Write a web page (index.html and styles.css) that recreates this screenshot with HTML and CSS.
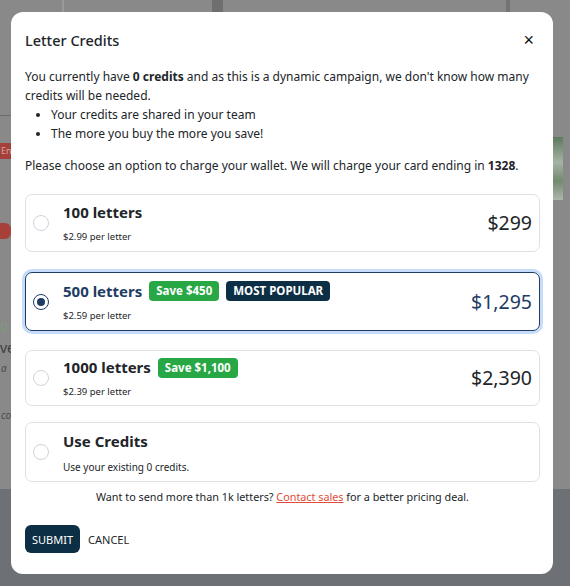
FILE: index.html
```html
<!DOCTYPE html>
<html lang="en">
<head>
<meta charset="utf-8">
<title>Letter Credits</title>
<link rel="stylesheet" href="styles.css">
</head>
<body>
<div class="page">
  <div class="bg-bottom"></div>
  <div class="bg-line bg-line-1"></div>
  <div class="bg-line bg-line-2"></div>
  <div class="bg-line bg-line-3"></div>
  <div class="bg-rule"></div>
  <div class="bg-tag">En</div>
  <div class="bg-dot"></div>
  <div class="bg-num">0</div>
  <div class="bg-text bg-text-1">ve</div>
  <div class="bg-text bg-text-2">a</div>
  <div class="bg-text bg-text-3">co</div>
  <div class="bg-plant"></div>
</div>

<div class="overlay">
  <div class="modal">
    <div class="modal-header">
      <h2 class="modal-title">Letter Credits</h2>
      <button class="close" type="button">&times;</button>
    </div>
    <div class="modal-body">
      <p class="intro">You currently have <b>0 credits</b> and as this is a dynamic campaign, we don't know how many credits will be needed.</p>
      <ul class="bullets">
        <li>Your credits are shared in your team</li>
        <li>The more you buy the more you save!</li>
      </ul>
      <p class="charge">Please choose an option to charge your wallet. We will charge your card ending in <b>1328</b>.</p>

      <div class="options">
        <label class="option opt-1">
          <span class="radio"></span>
          <span class="info">
            <span class="title-row"><span class="opt-title">100 letters</span></span>
            <span class="desc">$2.99 per letter</span>
          </span>
          <span class="price">$299</span>
        </label>

        <label class="option opt-2 selected">
          <span class="radio"><span class="radio-dot"></span></span>
          <span class="info">
            <span class="title-row"><span class="opt-title">500 letters</span><span class="badge badge-save">Save $450</span><span class="badge badge-popular">MOST POPULAR</span></span>
            <span class="desc">$2.59 per letter</span>
          </span>
          <span class="price">$1,295</span>
        </label>

        <label class="option opt-3">
          <span class="radio"></span>
          <span class="info">
            <span class="title-row"><span class="opt-title">1000 letters</span><span class="badge badge-save">Save $1,100</span></span>
            <span class="desc">$2.39 per letter</span>
          </span>
          <span class="price">$2,390</span>
        </label>

        <label class="option opt-4">
          <span class="radio"></span>
          <span class="info">
            <span class="title-row"><span class="opt-title">Use Credits</span></span>
            <span class="desc desc-wide">Use your existing 0 credits.</span>
          </span>
        </label>
      </div>

      <p class="more">Want to send more than 1k letters? <a href="#" class="contact">Contact sales</a> for a better pricing deal.</p>
    </div>
    <div class="modal-footer">
      <button class="btn btn-submit" type="button">SUBMIT</button>
      <button class="btn btn-cancel" type="button">CANCEL</button>
    </div>
  </div>
</div>
</body>
</html>
```

FILE: styles.css
```css
* { box-sizing: border-box; }
html, body {
  margin: 0;
  padding: 0;
  width: 570px;
  height: 586px;
  overflow: hidden;
}
body {
  font-family: "Noto Sans", "Open Sans", "Liberation Sans", sans-serif;
  color: #212529;
  background: #898989;
}

/* dimmed page behind the dialog */
.page {
  position: absolute;
  inset: 0;
  background: #898989;
}
.bg-bottom {
  position: absolute;
  left: 0; right: 0; top: 489px; bottom: 0;
  background: #6d7074;
}
.bg-line {
  position: absolute;
  top: 0;
  height: 12px;
}
.bg-line-1 { left: 62px; width: 2px; background: #9a9a9a; }
.bg-line-2 { left: 212px; width: 11px; background: #6f6f6f; }
.bg-line-3 { left: 506px; width: 4px; background: #737373; }
.bg-rule {
  position: absolute;
  left: 0; top: 115px; width: 11px; height: 1px;
  background: #6a6a6a;
}
.bg-tag {
  position: absolute;
  left: 0; top: 143px; width: 11px; height: 16px;
  background: #a3403a;
  color: #d9a09c;
  font-size: 9px;
  line-height: 16px;
  padding-left: 1px;
  overflow: hidden;
}
.bg-dot {
  position: absolute;
  left: 0; top: 223px; width: 11px; height: 16px;
  background: #a8403a;
  border-radius: 0 6px 6px 0;
}
.bg-num {
  position: absolute;
  left: 1px; top: 318px;
  font-size: 12px;
  color: #7c9e7c;
}
.bg-text {
  position: absolute;
  left: 0;
  color: #3d3d3d;
  white-space: nowrap;
}
.bg-text-1 { top: 338px; font-size: 14px; left: 0; }
.bg-text-2 { top: 361px; font-size: 10px; left: 1px; font-style: italic; color: #4b4b4b; }
.bg-text-3 { top: 408px; font-size: 10px; left: 1px; font-style: italic; color: #4b4b4b; }
.bg-plant {
  position: absolute;
  left: 553px; top: 137px; width: 10px; height: 63px;
  background: linear-gradient(180deg, #5b7a5b 0%, #a5b3a3 40%, #6f8c6d 70%, #b0b6ae 100%);
}

/* dialog */
.overlay {
  position: absolute;
  inset: 0;
  padding: 12px 17px 12px 11px;
}
.modal {
  width: 542px;
  height: 562px;
  background: #ffffff;
  border-radius: 12px;
  display: flex;
  flex-direction: column;
}
.modal-header {
  display: flex;
  align-items: center;
  justify-content: space-between;
  padding: 17px 19px 0 14px;
}
.modal-title {
  margin: 0;
  font-size: 14.5px;
  font-weight: 500;
  line-height: 22px;
}
.close {
  border: 0;
  background: none;
  padding: 0;
  font-size: 18px;
  line-height: 18px;
  color: #111;
  font-family: "Liberation Sans", sans-serif;
  cursor: pointer;
}
.modal-body {
  padding: 16px 13px 0 14px;
  font-size: 12px;
  line-height: 19px;
}
.intro { margin: 0; }
.bullets {
  margin: 0;
  padding-left: 26px;
}
.charge { margin: 13px 0 0; }

.options {
  margin-top: 19px;
  display: flex;
  flex-direction: column;
}
.option {
  display: flex;
  align-items: center;
  border: 1px solid #dee2e6;
  border-radius: 7px;
  padding: 0 7px 0 7px;
  cursor: pointer;
}
.opt-1 { height: 58px; }
.opt-2 { height: 59px; margin-top: 20px; }
.opt-3 { height: 56px; margin-top: 19px; }
.opt-4 { height: 60px; margin-top: 16px; }
.option.selected {
  border-color: #1e3c63;
  box-shadow: 0 0 0 3px #c6dcf8;
}
.radio {
  flex: none;
  width: 16px;
  height: 16px;
  border: 1px solid #ced4da;
  border-radius: 50%;
  display: flex;
  align-items: center;
  justify-content: center;
  margin-right: 14px;
}
.selected .radio {
  border: 1.5px solid #1e3c63;
}
.radio-dot {
  width: 8px;
  height: 8px;
  border-radius: 50%;
  background: #1e3c63;
}
.info {
  flex: 1;
  display: flex;
  flex-direction: column;
}
.title-row {
  display: flex;
  align-items: center;
  gap: 7px;
}
.opt-title {
  font-size: 15px;
  font-weight: 700;
  line-height: 21px;
}
.selected .opt-title,
.selected .price { color: #1e3c63; }
.badge {
  font-size: 11.5px;
  font-weight: 700;
  color: #fff;
  border-radius: 4px;
  padding: 0 7px;
  line-height: 20px;
}
.badge-save { background: #28a745; }
.badge-popular { background: #0d2f45; }
.desc {
  font-size: 9.5px;
  line-height: 14px;
  margin-top: 7px;
}
.desc-wide { font-size: 10px; margin-top: 8px; }
.price {
  font-size: 19.5px;
  line-height: 26px;
  font-weight: 400;
}

.more {
  margin: 6px 0 0;
  text-align: center;
  font-size: 10.8px;
  line-height: 17px;
}
.contact {
  color: #e24a3b;
  text-decoration: underline;
}

.modal-footer {
  display: flex;
  align-items: center;
  gap: 8px;
  padding: 20px 14px 0;
}
.btn {
  border: 0;
  font-family: inherit;
  font-size: 11px;
  cursor: pointer;
}
.btn-submit {
  background: #0d2f45;
  color: #fff;
  border-radius: 6px;
  height: 28px;
  padding: 0 7px;
}
.btn-cancel {
  background: none;
  color: #212529;
  padding: 0;
}
```
